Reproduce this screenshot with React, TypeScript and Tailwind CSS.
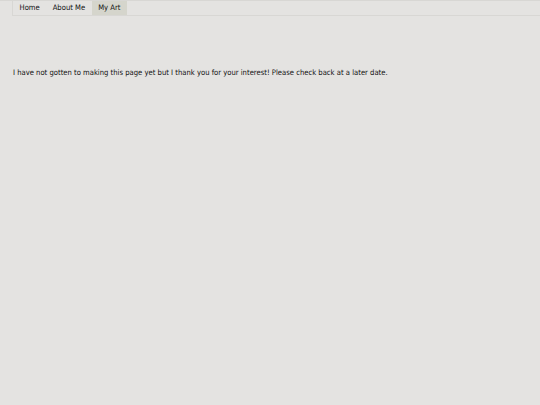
export default function App() {
  return (
    <div className="min-h-[405px] w-full bg-[#e4e3e1] text-[#111] [font-family:'DejaVu_Sans_Condensed','DejaVu_Sans',sans-serif] text-[7.6px]">
      <div className="border-t border-[#d8d7d4]">
        <div className="ml-3 flex h-[15px] border-b border-l border-[#d8d7d4]">
          <a className="flex items-center px-[6.5px]">Home</a>
          <a className="flex items-center px-[6.5px]">About Me</a>
          <a className="flex items-center bg-[#d5d5cc] px-[6.5px]">My Art</a>
        </div>
      </div>
      <p className="ml-[13px] mt-[51px]">
        I have not gotten to making this page yet but I thank you for your interest! Please check back at a later date.
      </p>
    </div>
  );
}
